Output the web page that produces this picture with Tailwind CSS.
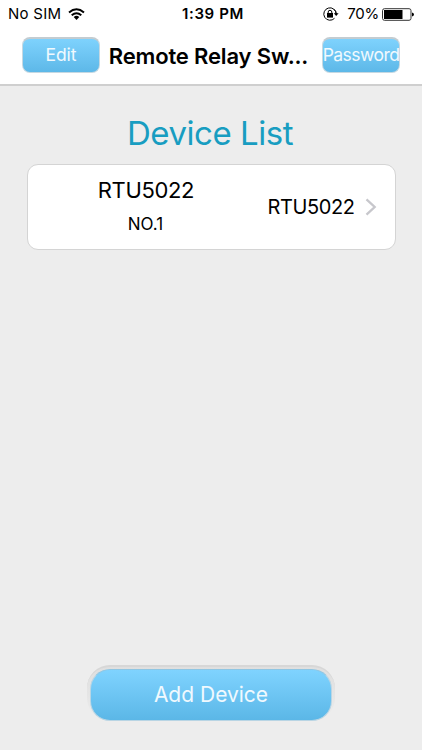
<!DOCTYPE html>
<html lang="en">
<head>
<meta charset="utf-8">
<title>Remote Relay Switch</title>
<script src="https://cdn.jsdelivr.net/npm/@tailwindcss/browser@4"></script>
</head>
<body class="bg-[#ededed] font-['Inter',sans-serif] text-black">
<div class="flex h-[750px] w-[422px] flex-col overflow-hidden whitespace-nowrap">
  <header class="h-[86px] shrink-0 border-b-2 border-[#cfcfcf] bg-white">
    <div class="grid h-7 grid-cols-[1fr_auto_1fr] items-center pr-[8px] pl-[8px]">
      <div class="flex items-center gap-[7px]">
        <span class="text-[15px] tracking-[0.250px]">No SIM</span>
        <svg class="h-[12px] w-[17px]" viewBox="0 0 17 12" fill="none" stroke="#000" stroke-width="2"><path d="M1 4.4Q8.500-1.900 16 4.400"/><path d="M3.700 7.200Q8.500 3.300 13.300 7.200"/><path d="M5.700 9Q8.500 6.700 11.300 9L8.500 12Z" fill="#000" stroke="none"/></svg>
      </div>
      <span class="pl-[4px] text-[15px] font-semibold tracking-[0.600px]">1:39 PM</span>
      <div class="flex items-center justify-end">
        <svg class="mr-[8px] h-[14px] w-[16px]" viewBox="0 0 16 14" fill="none" stroke="#000"><path d="M13.200 7A6.200 6.200 0 1 0 11.500 11.300M11 2.300A6.200 6.200 0 0 1 13.200 7"/><path d="M10.800 6.300H15.600L13.200 9Z" fill="#000" stroke="none"/><rect x="4" y="6" width="6" height="4.600" fill="#000" stroke="none"/><path d="M5.200 6.500V5Q5.200 3.300 7 3.300T8.800 5V6.500"/></svg>
        <span class="mr-[3px] text-[15px] tracking-[-0.2px]">70%</span>
        <svg class="h-[13px] w-[32px]" viewBox="0 0 32 13"><rect x=".5" y=".7" width="28.500" height="11.600" rx="2" fill="#fff" stroke="#333"/><path d="M2 2H20.500V11H2Z"/><path d="M30 4.500Q32 4.800 32 6.500T30 8.500Z"/></svg>
      </div>
    </div>
    <div class="flex h-[56px] items-center px-[22px] pb-[2px]">
      <button class="flex h-[36px] w-[78px] shrink-0 items-center justify-center rounded-[8px] border border-t-2 border-[#c5d8e2] border-t-[#c3ccd1] bg-linear-to-b from-[#7ed2fd] to-[#5db8e8] text-[17.500px] text-white/90">Edit</button>
      <h1 class="flex-1 pt-[2px] pr-[5px] text-center text-[22px] font-semibold tracking-[-0.150px]">Remote Relay Sw...</h1>
      <button class="flex h-[36px] w-[78px] shrink-0 items-center justify-center rounded-[8px] border border-t-2 border-[#c5d8e2] border-t-[#c3ccd1] bg-linear-to-b from-[#7ed2fd] to-[#5db8e8] text-[17.500px] tracking-[-0.550px] text-white/90">Password</button>
    </div>
  </header>
  <main class="flex flex-1 flex-col items-center">
    <h2 class="mt-[27px] pr-[2px] text-[33px] leading-[40px] tracking-[-0.450px] text-[#189dc1]">Device List</h2>
    <section class="mt-[11px] flex h-[86px] w-[369px] items-center rounded-[11px] border-[1.500px] border-[#d4d4d4] bg-white">
      <div class="flex w-[237px] flex-col items-center">
        <span class="-mt-[2px] text-[22px] leading-[30px] tracking-[-0.350px]">RTU5022</span>
        <span class="mt-[6px] pr-px text-[17px] leading-[26px]">NO.1</span>
      </div>
      <span class="ml-[3px] text-[20px] tracking-[-0.400px]">RTU5022</span>
      <svg class="ml-[10px] h-[18px] w-[12px]" viewBox="0 0 12 18" fill="none" stroke="#c7c7cc" stroke-width="2.300"><path d="M1.500 1.300L9.700 9L1.500 16.700"/></svg>
    </section>
    <div class="mt-auto mb-[29px] rounded-[23px] border-t-2 border-[#d7d7d7] bg-linear-to-b from-[#dfdfdf] via-[#e5e5e5] to-[#ededed] px-[3px] pt-[2px]">
      <button class="flex h-[52px] w-[242px] items-center justify-center rounded-[20px] border border-[#b9d5e4] border-t-[#8fc6e3] bg-linear-to-b from-[#7fd3ff] to-[#5bb7e7] text-[21px] text-white/90">Add Device</button>
    </div>
  </main>
</div>
</body>
</html>
